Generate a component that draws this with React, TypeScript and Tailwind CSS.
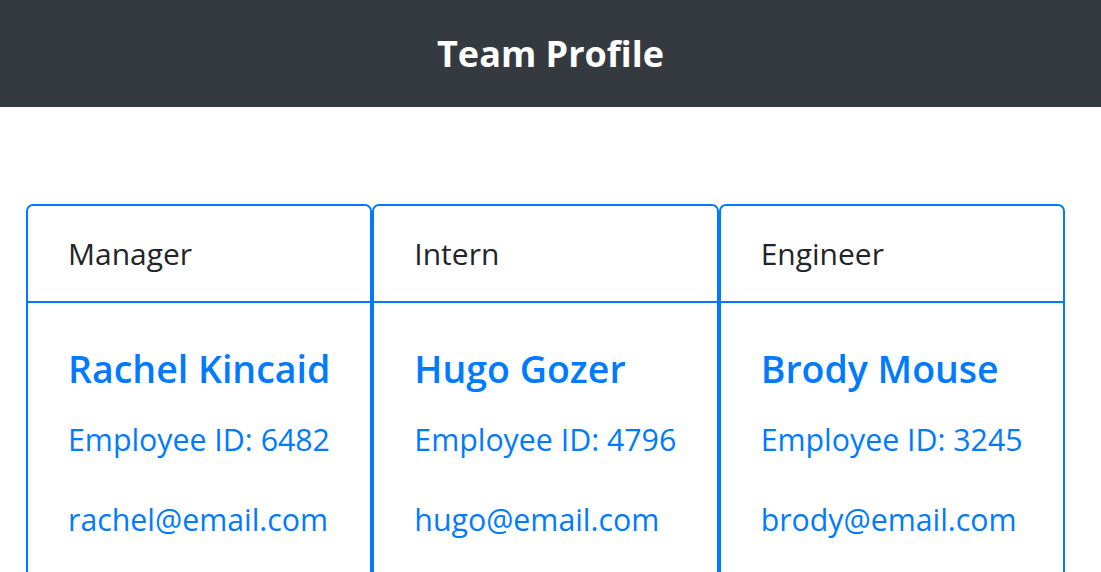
const team = [
  { role: "Manager", name: "Rachel Kincaid", id: 6482, email: "rachel@email.com" },
  { role: "Intern", name: "Hugo Gozer", id: 4796, email: "hugo@email.com" },
  { role: "Engineer", name: "Brody Mouse", id: 3245, email: "brody@email.com" },
];

const App = () => {
  return (
    <div className="min-h-screen bg-white font-['Open_Sans',sans-serif]">
      <header className="h-[107px] bg-[#343a40] flex items-center justify-center">
        <h1 className="text-[36px] font-bold text-white">Team Profile</h1>
      </header>
      <main className="pt-[97px] pl-[26px]">
        <div className="grid grid-cols-3 w-[1039px]">
          {team.map((member) => (
            <div
              key={member.role}
              className="border-2 border-[#007bff] rounded-[7px] h-[400px]"
            >
              <div className="px-10 py-6 border-b-2 border-[#007bff] text-[30px] leading-[47px] text-[#212529]">
                {member.role}
              </div>
              <div className="px-10 pt-[42px] text-[#007bff]">
                <h5 className="text-[37.5px] leading-[48px] font-semibold">{member.name}</h5>
                <p className="mt-[23px] text-[30.3px] leading-[48px]">Employee ID: {member.id}</p>
                <p className="mt-8 text-[30.3px] leading-[48px]">{member.email}</p>
              </div>
            </div>
          ))}
        </div>
      </main>
    </div>
  );
};

export default App;
